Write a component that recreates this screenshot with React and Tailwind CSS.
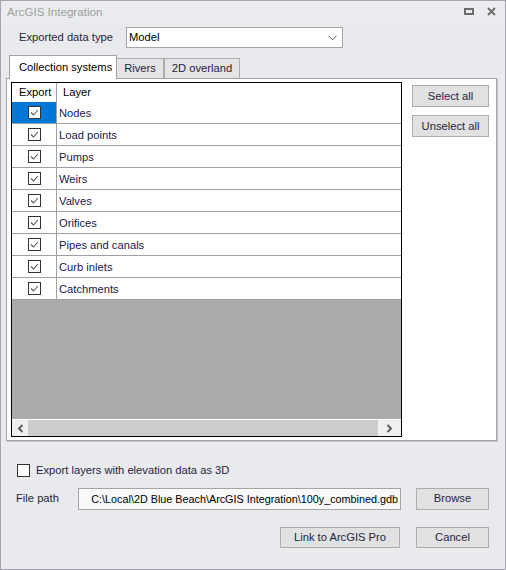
import React from "react";

const layers = [
  "Nodes",
  "Load points",
  "Pumps",
  "Weirs",
  "Valves",
  "Orifices",
  "Pipes and canals",
  "Curb inlets",
  "Catchments",
];

function CheckBox({ checked }) {
  return (
    <div className="w-[13px] h-[13px] border border-[#333333] bg-white flex items-center justify-center">
      {checked && (
        <svg width="11" height="11" viewBox="0 0 11 11">
          <path d="M2 5.5 L4.5 8 L9 3" fill="none" stroke="#5a5a5a" strokeWidth="1.1" />
        </svg>
      )}
    </div>
  );
}

function Button({ children, className = "" }) {
  return (
    <div
      className={
        "flex items-center justify-center bg-[#e1e1e1] border border-[#adadad] text-[#1f1f3d] whitespace-nowrap " +
        className
      }
    >
      {children}
    </div>
  );
}

export default function App() {
  return (
    <div className="w-[506px] h-[570px] border border-[#a5a6ad] bg-[#e9eaee] flex flex-col font-['Liberation_Sans',Arial,sans-serif] text-[11.2px] text-[#1f1f3d] overflow-hidden whitespace-nowrap">
      {/* title bar */}
      <div className="h-[21px] flex items-center justify-between pl-[6px] pr-[9px] bg-[#ebecef]">
        <span className="text-[#9d9d9d] text-[11.6px]">ArcGIS Integration</span>
        <div className="flex items-center gap-[13px]">
          <svg width="10" height="7" viewBox="0 0 10 7">
            <rect x="1" y="1" width="8" height="5" fill="none" stroke="#6b6b6b" strokeWidth="2" />
          </svg>
          <svg width="9" height="9" viewBox="0 0 9 9">
            <path d="M1 1 L8 8 M8 1 L1 8" stroke="#6b6b6b" strokeWidth="1.8" />
          </svg>
        </div>
      </div>

      {/* exported data type */}
      <div className="mt-[5px] flex items-center pl-[18px]">
        <span className="w-[107px]">Exported data type</span>
        <div className="w-[217px] h-[21px] bg-white border border-[#a5a5a5] flex items-center justify-between pl-[2px] pr-[5px]">
          <span className="text-black">Model</span>
          <svg width="9" height="6" viewBox="0 0 9 6">
            <path d="M0.5 0.8 L4.5 4.8 L8.5 0.8" fill="none" stroke="#555" strokeWidth="1" />
          </svg>
        </div>
      </div>

      {/* tabs */}
      <div className="mt-[7px] h-[23px] flex items-end pl-[8px]">
        <div className="relative z-10 w-[108px] h-[24px] -mb-px bg-white border-l border-t border-r border-[#a3a3a3] flex items-center pl-[9px] pb-[1px] text-black">
          Collection systems
        </div>
        <div className="-ml-px w-[48px] h-[20px] bg-[#e4e4e7] border-l border-t border-r border-[#adadad] flex items-center justify-center">
          Rivers
        </div>
        <div className="w-[76px] h-[20px] bg-[#e4e4e7] border-l border-t border-r border-[#adadad] flex items-center justify-center">
          2D overland
        </div>
      </div>

      {/* tab page */}
      <div className="ml-[5px] w-[491px] h-[363px] bg-white border border-[#a3a3a3] shadow-[1px_1px_0_#c4c5ca] flex pl-[4px] pt-[3px]">
        {/* grid */}
        <div className="w-[391px] h-[355px] border border-black flex flex-col">
          <div className="h-[19px] flex items-center text-black">
            <div className="w-[45px] h-full border-r border-[#a0a0a0] flex items-center pl-[7px]">Export</div>
            <div className="pl-[6px]">Layer</div>
          </div>
          {layers.map((name, i) => (
            <div key={name} className="h-[22px] flex border-b border-[#a0a0a0]">
              <div
                className={
                  "w-[45px] h-full border-r border-[#a0a0a0] flex items-center justify-center " +
                  (i === 0 ? "bg-[#0078d7]" : "")
                }
              >
                <CheckBox checked />
              </div>
              <div className="flex items-center pl-[2px] pt-[1px] text-[#20204a]">{name}</div>
            </div>
          ))}
          <div className="flex-1 bg-[#ababab]" />
          {/* horizontal scroll bar */}
          <div className="h-[17px] bg-[#f0f0f0] border-t border-white flex items-center">
            <div className="w-[16px] h-full flex items-center justify-center">
              <svg width="7" height="9" viewBox="0 0 7 9">
                <path d="M5.5 1 L2 4.5 L5.5 8" fill="none" stroke="#606060" strokeWidth="2" />
              </svg>
            </div>
            <div className="w-[350px] h-full bg-[#cdcdcd]" />
            <div className="flex-1 h-full flex items-center justify-center">
              <svg width="7" height="9" viewBox="0 0 7 9">
                <path d="M1.5 1 L5 4.5 L1.5 8" fill="none" stroke="#606060" strokeWidth="2" />
              </svg>
            </div>
          </div>
        </div>

        {/* side buttons */}
        <div className="ml-[10px] mt-[3px] flex flex-col gap-[8px]">
          <Button className="w-[77px] h-[22px]">Select all</Button>
          <Button className="w-[77px] h-[22px]">Unselect all</Button>
        </div>
      </div>

      {/* 3D option */}
      <div className="mt-[21px] ml-[16px] flex items-center">
        <div className="w-[13px] h-[13px] border border-[#333333] bg-white" />
        <span className="ml-[6px]">Export layers with elevation data as 3D</span>
      </div>

      {/* file path */}
      <div className="mt-[9px] ml-[15px] h-[22px] flex items-center">
        <span className="w-[62px]">File path</span>
        <div className="w-[323px] h-[22px] bg-[#f9f9f9] border border-[#a5a5a5] flex items-center justify-end pr-[2px] overflow-hidden text-black text-[10.8px]">
          C:\Local\2D Blue Beach\ArcGIS Integration\100y_combined.gdb
        </div>
        <Button className="ml-[15px] w-[73px] h-[22px]">Browse</Button>
      </div>

      {/* dialog buttons */}
      <div className="mt-[17px] ml-[279px] flex">
        <Button className="w-[120px] h-[21px]">Link to ArcGIS Pro</Button>
        <Button className="ml-[16px] w-[73px] h-[21px]">Cancel</Button>
      </div>
    </div>
  );
}
